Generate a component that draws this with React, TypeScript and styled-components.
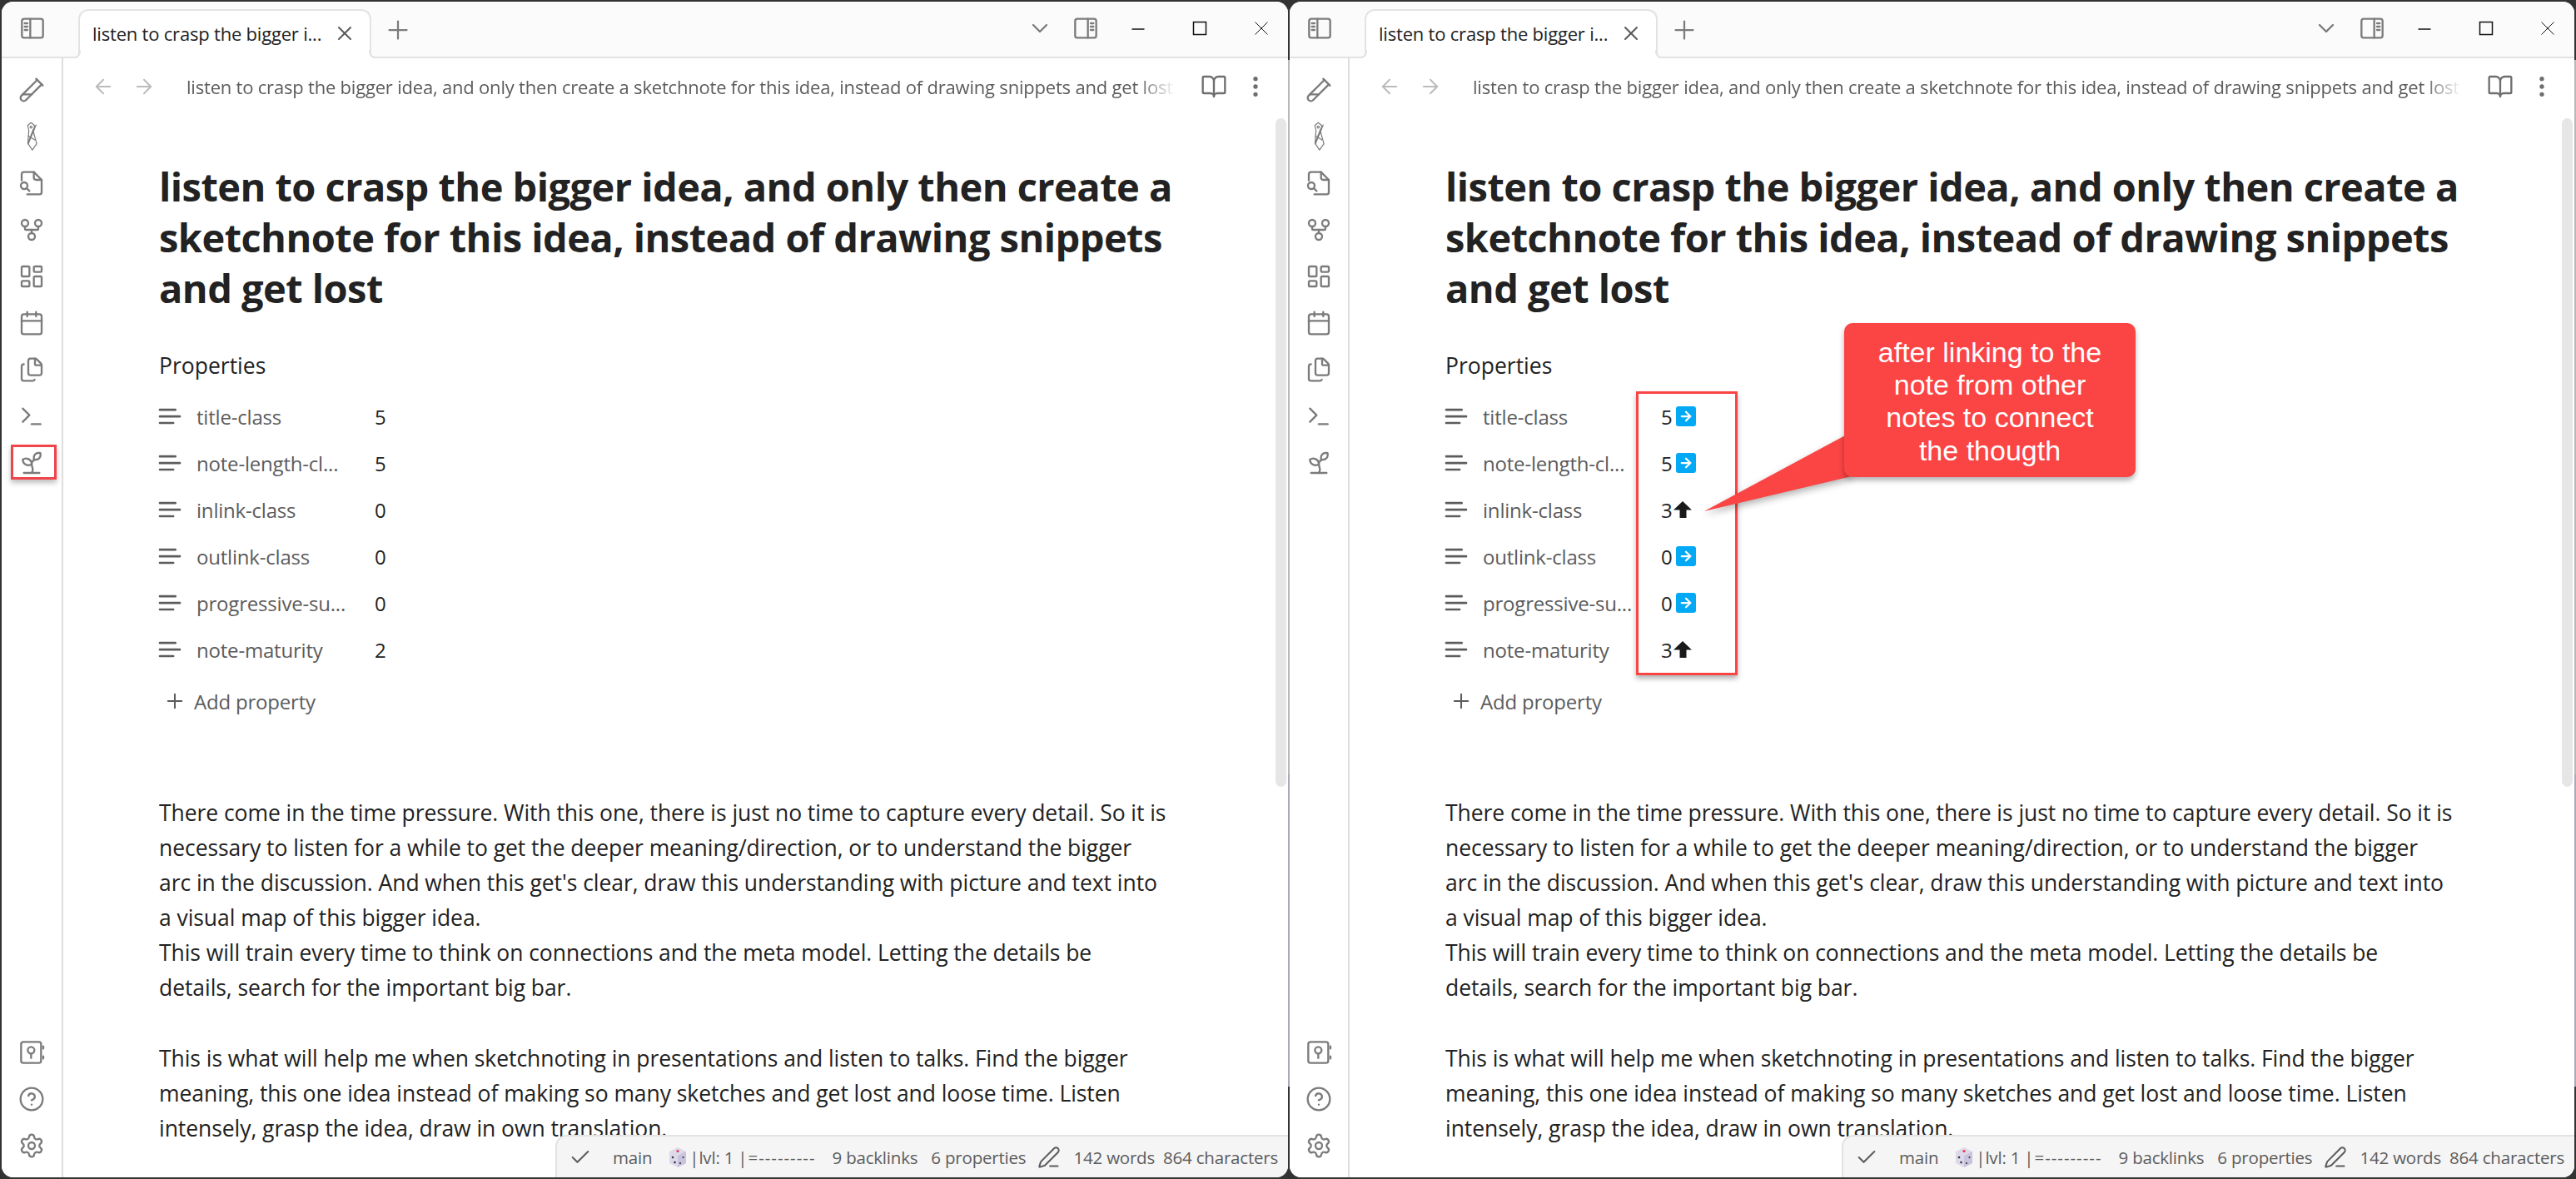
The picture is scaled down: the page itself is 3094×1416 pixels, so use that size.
import React from "react";
import styled, { createGlobalStyle } from "styled-components";
import {
  ArrowLeft, ArrowRight, BookOpen, Calendar, Check, ChevronDown, CircleHelp, EllipsisVertical,
  Files, GitFork, LayoutDashboard, PenLine, Plus, Settings, Sprout, TestTubeDiagonal, Terminal, X,
} from "lucide-react";

const GlobalStyle = createGlobalStyle`
  html, body { margin: 0; padding: 0; background: #333; }
  * { box-sizing: border-box; }
  #root { width: 3094px; height: 1416px; overflow: hidden; }
`;

const FONT = `"Open Sans", "Noto Sans", "Liberation Sans", sans-serif`;
const EDGE = `linear-gradient(to bottom, #333 0 72px, #b8b8b8 72px 930px, #aaa8ba 930px 1305px, #333 1305px)`;

const Desktop = styled.div`
  width: 3094px;
  height: 1416px;
  padding: 2px;
  display: grid;
  grid-template-columns: 1545px 1543px;
  column-gap: 2px;
  background: ${EDGE} 1547px 0 / 2px 100% no-repeat, ${EDGE} 3092px 0 / 2px 100% no-repeat, #333;
  font-family: ${FONT};
`;

const Win = styled.section`
  position: relative;
  height: 1412px;
  background: #fff;
  border-radius: 14px;
  overflow: hidden;
  display: grid;
  grid-template-rows: 68px 1fr;
`;

const TitleBar = styled.header`
  position: relative;
  display: flex;
  align-items: flex-end;
  background: #fbfbfb;
  border-bottom: 2px solid #e3e3e3;
`;

const SidebarToggle = styled.div<{ $rail: number }>`
  width: ${(p) => p.$rail}px;
  height: 100%;
  display: flex;
  align-items: center;
  justify-content: center;
  padding-bottom: 3px;
  flex: none;
  color: #7b7b7b;
`;

const Tab = styled.div`
  position: relative;
  z-index: 1;
  margin-left: 18px;
  margin-bottom: -2px;
  width: 352px;
  height: 59px;
  background: #fff;
  border: 2px solid #e3e3e3;
  border-bottom: 0;
  border-radius: 12px 12px 0 0;
  display: flex;
  align-items: center;
  padding: 0 16px 4px 15px;
  flex: none;
  color: #222;
  font-size: 22px;
  letter-spacing: -0.2px;

  &::before,
  &::after {
    content: "";
    position: absolute;
    bottom: 0;
    width: 8px;
    height: 8px;
    border-bottom: 2px solid #e3e3e3;
  }
  &::before {
    left: -9px;
    border-right: 2px solid #e3e3e3;
    border-bottom-right-radius: 8px;
    box-shadow: 3px 3px 0 0 #fff;
  }
  &::after {
    right: -9px;
    border-left: 2px solid #e3e3e3;
    border-bottom-left-radius: 8px;
    box-shadow: -3px 3px 0 0 #fff;
  }
`;

const TabLabel = styled.span`
  flex: 1;
  white-space: nowrap;
`;

const GreyIcon = styled.span<{ $c?: string }>`
  display: inline-flex;
  flex: none;
  color: ${(p) => p.$c || "#7b7b7b"};
`;

const NewTab = styled(GreyIcon)`
  margin: 0 0 14px 14px;
`;

const BarEnd = styled.div`
  margin-left: auto;
  margin-right: -5px;
  height: 100%;
  display: flex;
  align-items: center;
  padding-bottom: 2px;
`;

const Chevron = styled(GreyIcon)`
  margin-right: 23px;
`;

const RightToggle = styled(GreyIcon)`
  margin-right: 10px;
`;

const WinButton = styled.span`
  width: 74px;
  height: 100%;
  display: flex;
  align-items: center;
  justify-content: center;
  color: #111;
`;

const Body = styled.div<{ $rail: number }>`
  display: grid;
  grid-template-columns: ${(p) => p.$rail}px 1fr;
  min-height: 0;
`;

const Ribbon = styled.nav`
  border-right: 2px solid #dedede;
  background: #fff;
  display: flex;
  flex-direction: column;
  align-items: center;
  padding: 10px 0 10px;
  color: #7b7b7b;
`;

const RibbonIcon = styled.span`
  position: relative;
  height: 56px;
  width: 56px;
  flex: none;
  display: flex;
  align-items: center;
  justify-content: center;
`;

const RibbonGap = styled.div`
  flex: 1;
`;

const Mark = styled.span`
  position: absolute;
  left: 3px;
  top: 6px;
  width: 55px;
  height: 42px;
  border: 3px solid #f0444b;
  box-shadow: 0 4px 6px rgba(0, 0, 0, 0.25);
`;

const Pane = styled.main`
  position: relative;
  min-width: 0;
  min-height: 0;
  overflow: hidden;
  display: flex;
  flex-direction: column;
`;

const NavRow = styled.div`
  height: 68px;
  flex: none;
  display: flex;
  align-items: center;
  padding: 0 0 0 34px;
`;

const NavArrows = styled.div`
  display: flex;
  gap: 21px;
  color: #bcbcbc;
  flex: none;
`;

const NavTitle = styled.div`
  margin-left: 37px;
  width: 1188px;
  flex: none;
  white-space: nowrap;
  overflow: hidden;
  color: #5c5c5c;
  font-size: 22px;
  letter-spacing: -0.2px;
  -webkit-mask-image: linear-gradient(to right, #000 calc(100% - 46px), transparent);
  mask-image: linear-gradient(to right, #000 calc(100% - 46px), transparent);
`;

const NavActions = styled.div`
  margin-left: 30px;
  display: flex;
  align-items: center;
  gap: 18px;
  color: #6e6e6e;
`;

const ScrollThumb = styled.div`
  position: absolute;
  top: 72px;
  right: 2px;
  width: 13px;
  height: 803px;
  border-radius: 7px;
  background: #e6e6e6;
`;

const Sheet = styled.article`
  width: 1243px;
  margin-left: 115px;
  flex: 1;
  min-height: 0;
  padding-top: 56px;
  color: #222;
`;

const Heading = styled.h1`
  margin: 0;
  font-size: 47px;
  line-height: 61px;
  font-weight: 700;
  letter-spacing: -0.55px;
  color: #222;
  white-space: nowrap;
`;

const PropsHeading = styled.h2`
  margin: 42px 0 0;
  font-size: 26.5px;
  line-height: 40px;
  font-weight: 500;
  color: #222;
`;

const PropList = styled.ul`
  list-style: none;
  margin: 13px 0 0;
  padding: 0;
`;

const PropRow = styled.li`
  height: 56px;
  display: flex;
  align-items: center;
  font-size: 24px;
  color: #5c5c5c;
`;

const PropIcon = styled.svg`
  width: 32px;
  height: 32px;
  flex: none;
  margin-left: -3px;
  fill: none;
  stroke: #5c5c5c;
  stroke-width: 2;
  stroke-linecap: round;
`;

const PropName = styled.span`
  margin-left: 16px;
  width: 214px;
  flex: none;
  white-space: nowrap;
  letter-spacing: -0.2px;
`;

const PropValue = styled.span`
  display: inline-flex;
  align-items: center;
  gap: 1px;
  color: #222;
`;

const ArrowChip = styled.span`
  width: 24px;
  height: 24px;
  margin-left: 3px;
  border-radius: 3px;
  background: #03a9f4;
  color: #fff;
  display: inline-flex;
  align-items: center;
  justify-content: center;
`;

const AddRow = styled.div`
  height: 56px;
  margin-top: 6px;
  display: flex;
  align-items: center;
  gap: 9px;
  padding-left: 5px;
  font-size: 24px;
  letter-spacing: -0.2px;
  color: #5c5c5c;
`;

const Text = styled.div`
  margin-top: 85px;
  font-size: 26.5px;
  line-height: 42.1px;
  white-space: nowrap;
  letter-spacing: -0.06px;
  color: #222;
`;

const Blank = styled.div`
  height: 42.1px;
`;

const StatusBar = styled.footer`
  position: absolute;
  right: 0;
  bottom: 0;
  width: 880px;
  height: 51px;
  background: #f5f5f5;
  border: 2px solid #e3e3e3;
  border-width: 2px 0 0 2px;
  border-top-left-radius: 14px;
  display: flex;
  align-items: center;
  font-size: 20.5px;
  letter-spacing: -0.2px;
  color: #5c5c5c;
  white-space: nowrap;
`;

const StatusItem = styled.span<{ $l: number; $track?: number }>`
  margin-left: ${(p) => p.$l}px;
  letter-spacing: ${(p) => (p.$track === undefined ? -0.2 : p.$track)}px;
  display: inline-flex;
  align-items: center;
  flex: none;
`;

const Overlay = styled.div`
  position: absolute;
  left: 0;
  top: 0;
  width: 0;
  height: 0;
`;

const RedBox = styled.div`
  position: absolute;
  left: 1965px;
  top: 470px;
  width: 122px;
  height: 341px;
  border: 3px solid #fb4444;
  box-shadow: 0 4px 6px rgba(0, 0, 0, 0.3);
`;

const CalloutTail = styled.svg`
  position: absolute;
  left: 2030px;
  top: 500px;
  width: 210px;
  height: 130px;
  overflow: visible;
  filter: drop-shadow(0 4px 4px rgba(0, 0, 0, 0.3));
`;

const Callout = styled.div`
  position: absolute;
  left: 2215px;
  top: 388px;
  width: 350px;
  height: 185px;
  background: #fb4444;
  border-radius: 10px;
  color: #fff;
  font-family: "Liberation Sans", Arial, sans-serif;
  font-size: 34px;
  line-height: 39.2px;
  text-align: center;
  padding-top: 16px;
  box-shadow: 0 4px 6px rgba(0, 0, 0, 0.3);
`;

const SideGlyph = styled.svg<{ $mirror?: boolean }>`
  width: 32px;
  height: 32px;
  fill: none;
  stroke: currentColor;
  stroke-width: 1.75;
  stroke-linecap: round;
  stroke-linejoin: round;
  transform: ${(p) => (p.$mirror ? "scaleX(-1)" : "none")};
`;

/* ---------- drawn icons ---------- */
const I = 32;

const SideIcon = ({ mirror }: { mirror?: boolean }) => (
  <SideGlyph viewBox="0 0 24 24" $mirror={mirror}>
    <rect x="2.5" y="3.5" width="19" height="17" rx="2" />
    <path d="M10 3.5v17" />
    <path d="M5 7.5h2.5M5 10.5h2.5M5 13.5h2.5" />
  </SideGlyph>
);

const ClipTie = () => (
  <svg width={32} height={36} viewBox="0 0 24 27" fill="none" stroke="currentColor" strokeWidth="0.9" strokeLinecap="round" strokeLinejoin="round">
    <path d="M9.5 8 8.4 3.5 11.5 1l3.2 2.6-1.3 5 3.2 11.4-4 5.6-4-6z" />
    <circle cx="11.5" cy="5" r=".9" />
    <path d="M16 3 9 20M13.5 7l-4.5 11.5M9 13l5.8 3.5" />
  </svg>
);

const FileSearchIcon = () => (
  <svg width={32} height={32} viewBox="0 0 24 24" fill="none" stroke="currentColor" strokeWidth="1.75" strokeLinecap="round" strokeLinejoin="round">
    <path d="M3 9.5V4a2 2 0 0 1 2-2h9l7 7v11a2 2 0 0 1-2 2H8" />
    <path d="M14 2v5a2 2 0 0 0 2 2h5" />
    <circle cx="5.25" cy="14.25" r="3" />
    <path d="m7.5 16.5 2.5 2.5" />
  </svg>
);

const VaultIcon = () => (
  <svg width={32} height={32} viewBox="0 0 24 24" fill="none" stroke="currentColor" strokeWidth="1.75" strokeLinecap="round" strokeLinejoin="round">
    <rect x="2.5" y="2.5" width="18" height="19" rx="2" />
    <circle cx="11.5" cy="10" r="3" />
    <path d="M11.5 13v4M22.5 6.5v2M22.5 15.5v2" />
  </svg>
);

const PropLines = () => (
  <PropIcon viewBox="0 0 24 24">
    <path d="M17 6.1H3M21 12.1H3M15.1 18H3" />
  </PropIcon>
);

const WinMin = () => (
  <svg width={20} height={20} viewBox="0 0 20 20" stroke="currentColor" strokeWidth="1.5"><path d="M2.5 11h15" /></svg>
);
const WinMax = () => (
  <svg width={20} height={20} viewBox="0 0 20 20" fill="none" stroke="currentColor" strokeWidth="1.5"><rect x="2.5" y="2.5" width="15" height="15" /></svg>
);
const WinClose = () => (
  <svg width={20} height={20} viewBox="0 0 20 20" stroke="currentColor" strokeWidth="1"><path d="m2.5 2.5 15 15M17.5 2.5l-15 15" /></svg>
);

const Dice = () => (
  <svg width={24} height={26} viewBox="0 0 24 26">
    <path d="M12 1 22 6v14l-10 5-10-5V6z" fill="#ddd8ea" />
    <path d="M12 11 22 6v14l-10 5z" fill="#c9c3de" />
    <circle cx="12" cy="5.5" r="1.6" fill="#e63946" />
    <circle cx="6" cy="13" r="1.3" fill="#333" /><circle cx="8.5" cy="19" r="1.3" fill="#333" />
    <circle cx="15" cy="20" r="1.1" fill="#333" /><circle cx="18.5" cy="13" r="1.1" fill="#333" />
  </svg>
);

const UpArrow = () => (
  <svg width={22} height={20} viewBox="0 0 22 20"><path d="M11 0 22 10.5h-6.5V20h-8v-9.5H0z" fill="#1a1a1a" /></svg>
);

/* ---------- data ---------- */
const TITLE = "listen to crasp the bigger idea, and only then create a sketchnote for this idea, instead of drawing snippets and get lost";

const topRibbon = [
  <TestTubeDiagonal size={I} strokeWidth={1.75} />,
  <ClipTie />,
  <FileSearchIcon />,
  <GitFork size={I} strokeWidth={1.75} />,
  <LayoutDashboard size={I} strokeWidth={1.75} />,
  <Calendar size={I} strokeWidth={1.75} />,
  <Files size={I} strokeWidth={1.75} />,
  <Terminal size={I} strokeWidth={1.75} />,
  <Sprout size={I} strokeWidth={1.75} />,
];

const names = ["title-class", "note-length-cl...", "inlink-class", "outlink-class", "progressive-su...", "note-maturity"];

type Val = { n: string; up?: boolean; plain?: boolean };

const leftVals: Val[] = ["5", "5", "0", "0", "0", "2"].map((n) => ({ n, plain: true }));
const rightVals: Val[] = [
  { n: "5" }, { n: "5" }, { n: "3", up: true }, { n: "0" }, { n: "0" }, { n: "3", up: true },
];

const paragraphOne = [
  "There come in the time pressure. With this one, there is just no time to capture every detail. So it is",
  "necessary to listen for a while to get the deeper meaning/direction, or to understand the bigger",
  "arc in the discussion. And when this get's clear, draw this understanding with picture and text into",
  "a visual map of this bigger idea.",
  "This will train every time to think on connections and the meta model. Letting the details be",
  "details, search for the important big bar.",
];
const paragraphTwo = [
  "This is what will help me when sketchnoting in presentations and listen to talks. Find the bigger",
  "meaning, this one idea instead of making so many sketches and get lost and loose time. Listen",
  "intensely, grasp the idea, draw in own translation.",
];

const Window = ({ vals, marked, rail }: { vals: Val[]; marked?: boolean; rail: number }) => (
  <Win>
    <TitleBar>
      <SidebarToggle $rail={rail}><SideIcon /></SidebarToggle>
      <Tab>
        <TabLabel>listen to crasp the bigger i...</TabLabel>
        <GreyIcon $c="#5c5c5c"><X size={28} strokeWidth={1.75} /></GreyIcon>
      </Tab>
      <NewTab><Plus size={36} strokeWidth={1.5} /></NewTab>
      <BarEnd>
        <Chevron><ChevronDown size={32} strokeWidth={1.75} /></Chevron>
        <RightToggle><SideIcon mirror /></RightToggle>
        <WinButton><WinMin /></WinButton>
        <WinButton><WinMax /></WinButton>
        <WinButton><WinClose /></WinButton>
      </BarEnd>
    </TitleBar>
    <Body $rail={rail}>
      <Ribbon>
        {topRibbon.map((icon, i) => (
          <RibbonIcon key={i}>
            {icon}
            {marked && i === topRibbon.length - 1 ? <Mark /> : null}
          </RibbonIcon>
        ))}
        <RibbonGap />
        <RibbonIcon><VaultIcon /></RibbonIcon>
        <RibbonIcon><CircleHelp size={I} strokeWidth={1.75} /></RibbonIcon>
        <RibbonIcon><Settings size={I} strokeWidth={1.75} /></RibbonIcon>
      </Ribbon>
      <Pane>
        <NavRow>
          <NavArrows>
            <ArrowLeft size={28} strokeWidth={1.75} />
            <ArrowRight size={28} strokeWidth={1.75} />
          </NavArrows>
          <NavTitle>{TITLE}</NavTitle>
          <NavActions>
            <BookOpen size={32} strokeWidth={1.75} />
            <EllipsisVertical size={32} strokeWidth={2} />
          </NavActions>
        </NavRow>
        <ScrollThumb />
        <Sheet>
          <Heading>
            listen to crasp the bigger idea, and only then create a<br />
            sketchnote for this idea, instead of drawing snippets<br />
            and get lost
          </Heading>
          <PropsHeading>Properties</PropsHeading>
          <PropList>
            {names.map((name, i) => (
              <PropRow key={name}>
                <PropLines />
                <PropName>{name}</PropName>
                <PropValue>
                  {vals[i].n}
                  {vals[i].plain ? null : vals[i].up ? (
                    <UpArrow />
                  ) : (
                    <ArrowChip><ArrowRight size={18} strokeWidth={3} /></ArrowChip>
                  )}
                </PropValue>
              </PropRow>
            ))}
          </PropList>
          <AddRow><Plus size={28} strokeWidth={1.75} />Add property</AddRow>
          <Text>
            {paragraphOne.map((l) => <div key={l}>{l}</div>)}
            <Blank />
            {paragraphTwo.map((l) => <div key={l}>{l}</div>)}
          </Text>
        </Sheet>
        <StatusBar>
          <StatusItem $l={14}><Check size={28} strokeWidth={1.75} /></StatusItem>
          <StatusItem $l={25}>main</StatusItem>
          <StatusItem $l={19}><Dice /></StatusItem>
          <StatusItem $l={2}>|lvl: 1 |</StatusItem>
          <StatusItem $l={1} $track={1}>=---------</StatusItem>
          <StatusItem $l={20}>9 backlinks</StatusItem>
          <StatusItem $l={16}>6 properties</StatusItem>
          <StatusItem $l={14}><PenLine size={28} strokeWidth={1.75} /></StatusItem>
          <StatusItem $l={15}>142 words</StatusItem>
          <StatusItem $l={10}>864 characters</StatusItem>
        </StatusBar>
      </Pane>
    </Body>
  </Win>
);

export default function App() {
  return (
    <>
      <GlobalStyle />
      <Desktop>
        <Window vals={leftVals} marked rail={74} />
        <Window vals={rightVals} rail={72} />
      </Desktop>
      <Overlay>
        <RedBox />
        <CalloutTail viewBox="0 0 210 130">
          <path d="M188 22 17 114 194 72z" fill="#fb4444" />
        </CalloutTail>
        <Callout>
          after linking to the<br />
          note from other<br />
          notes to connect<br />
          the thougth
        </Callout>
      </Overlay>
    </>
  );
}
